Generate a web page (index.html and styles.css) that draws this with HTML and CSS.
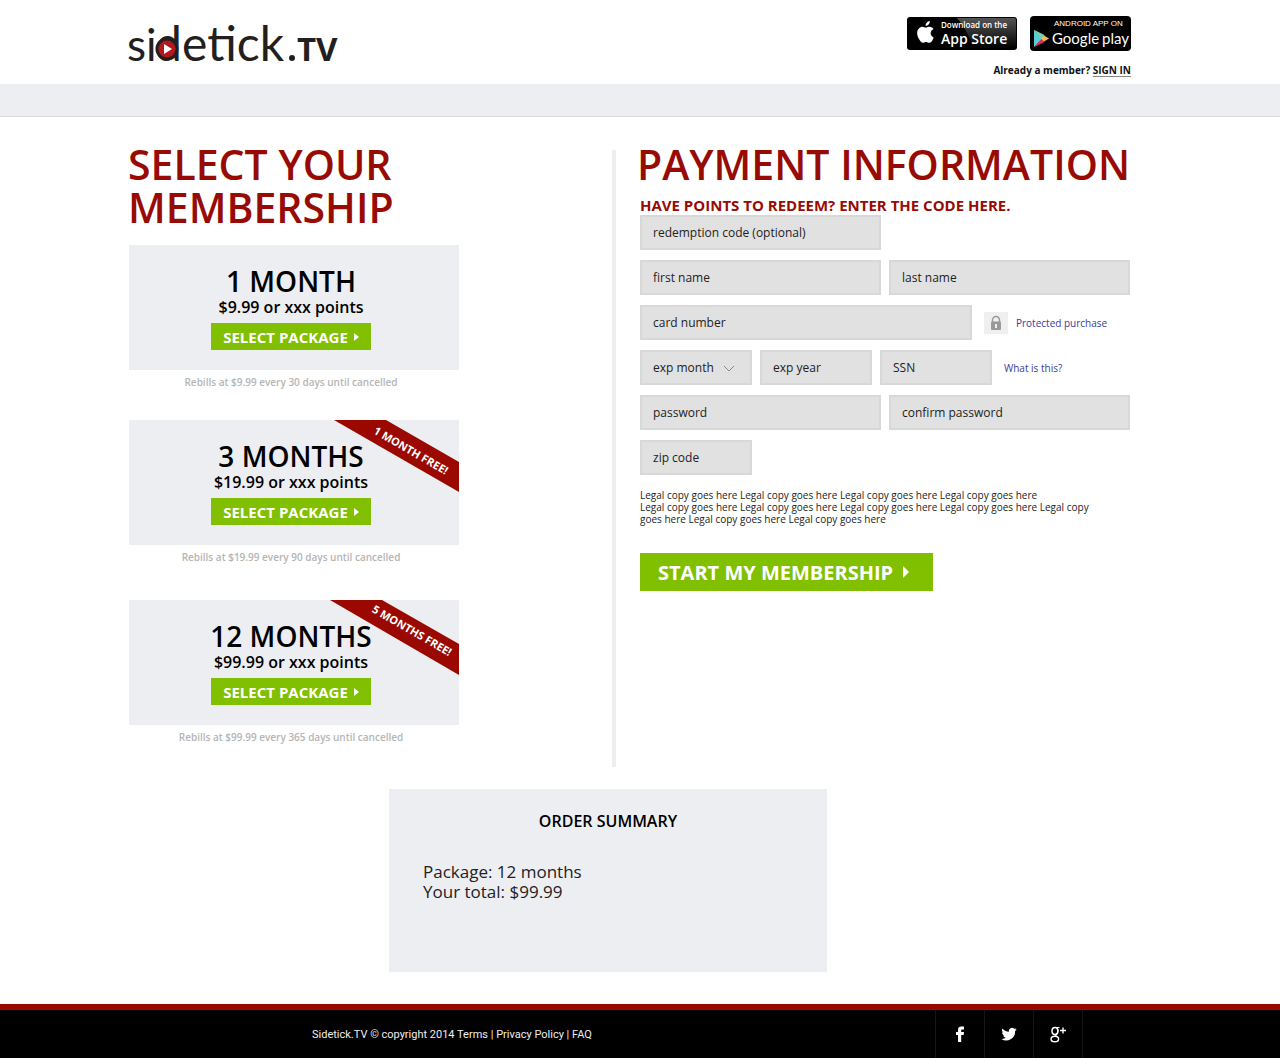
FILE: index.html
```html
<!DOCTYPE html>
<html lang="en">
<head>
<meta charset="utf-8">
<meta name="viewport" content="width=device-width, initial-scale=1">
<title>Sidetick.TV – Select your membership</title>
<link rel="stylesheet" href="styles.css">
</head>
<body>
<header class="site-header">
  <a class="logo" href="#" aria-label="sidetick.TV">
    <svg width="220" height="64" viewBox="-4 0 220 64">
      <g fill="#231f20">
        <text class="logo-small" x="-1" y="45">si</text>
        <text class="logo-thin" x="27" y="45">d</text>
        <text class="logo-thin" x="54" y="45">etick</text>
        <circle cx="164" cy="42" r="3"/>
        <text class="logo-bold" x="169" y="45">TV</text>
      </g>
      <circle cx="39" cy="33" r="10" fill="#b3171b" stroke="#231f20" stroke-width="3"/>
      <path d="M36 28v10l8-5z" fill="#fff"/>
    </svg>
  </a>
  <div class="header-side">
    <div class="badges">
      <a href="#" aria-label="Download on the App Store">
        <svg width="110" height="33" viewBox="0 0 110 33">
          <defs><linearGradient id="gloss" x1="0" y1="0" x2="0" y2="1"><stop offset="0" stop-color="#555"/><stop offset="1" stop-color="#000"/></linearGradient></defs>
          <rect width="110" height="33" rx="3" fill="#000"/>
          <path d="M50 1h57q2 0 2 2v28H66Q60 12 50 1z" fill="url(#gloss)"/>
          <path d="M23 10c-2-1-3 .7-4 .7S16 9.200 14 10c-5 2-4.500 8-2 12 1 2 2.500 4 4.200 3.700 1.300-.4 1.800-.8 3-.8s1.800.8 3.200.8c1.900 0 3.600-3 4.200-5.300-4-1.800-3.800-6.800 0-8.400-1-1.400-2.400-2-3.600-2zM18.600 9c-.2-2.500 1.700-4.700 4.200-5 .2 2.600-1.900 4.900-4.200 5z" fill="#fff"/>
          <text class="badge-small" x="34" y="11">Download on the</text>
          <text class="badge-app" x="34" y="27">App Store</text>
        </svg>
      </a>
      <a href="#" aria-label="Android app on Google Play">
        <svg width="101" height="35" viewBox="0 0 101 35">
          <rect width="101" height="35" rx="4" fill="#000"/>
          <path d="M4 14v17l9-8.500z" fill="#5ccbd8"/>
          <path d="M4 14l6 6 4.500-1z" fill="#8bd19a"/>
          <path d="M4 31l6-6 4.500 1z" fill="#d8437e"/>
          <path d="M4 14l11 6-3 2.500z" fill="#79d0b0"/>
          <path d="M4 31l11-6-3-2.500z" fill="#d8374c"/>
          <path d="M14 19.500l5 3-5 3-3-3z" fill="#f5b95c"/>
          <text class="badge-android" x="24" y="10">ANDROID APP ON</text>
          <text class="badge-google" x="22" y="28">Google</text>
          <text class="badge-google" x="72" y="28">play</text>
        </svg>
      </a>
    </div>
    <p class="member">Already a member? <a href="#">SIGN IN</a></p>
  </div>
</header>
<div class="subbar"></div>

<main class="page">
  <div class="columns">
    <section class="plans">
      <h1 class="title">SELECT YOUR<br>MEMBERSHIP</h1>
      <article class="plan">
        <div class="plan-card">
          <h2>1 MONTH</h2>
          <p class="price">$9.99 or xxx points</p>
          <button class="btn" type="button">SELECT PACKAGE <svg width="5" height="8" viewBox="0 0 5 8"><path d="M0 0l5 4-5 4z" fill="currentColor"/></svg></button>
        </div>
        <p class="rebill">Rebills at $9.99 every 30 days until cancelled</p>
      </article>
      <article class="plan">
        <div class="plan-card">
          <h2>3 MONTHS</h2>
          <p class="price">$19.99 or xxx points</p>
          <button class="btn" type="button">SELECT PACKAGE <svg width="5" height="8" viewBox="0 0 5 8"><path d="M0 0l5 4-5 4z" fill="currentColor"/></svg></button>
          <svg class="ribbon" width="130" height="75" viewBox="0 0 130 75"><path d="M5 0h52l73 42v30z" fill="#9b0800"/><text transform="translate(80 34) rotate(30)">1 MONTH FREE!</text></svg>
        </div>
        <p class="rebill">Rebills at $19.99 every 90 days until cancelled</p>
      </article>
      <article class="plan plan-year">
        <div class="plan-card">
          <h2>12 MONTHS</h2>
          <p class="price">$99.99 or xxx points</p>
          <button class="btn" type="button">SELECT PACKAGE <svg width="5" height="8" viewBox="0 0 5 8"><path d="M0 0l5 4-5 4z" fill="currentColor"/></svg></button>
          <svg class="ribbon" width="130" height="75" viewBox="0 0 130 75"><path d="M1 0h52l77 44v31z" fill="#9b0800"/><text transform="translate(81 34) rotate(30)">5 MONTHS FREE!</text></svg>
        </div>
        <p class="rebill">Rebills at $99.99 every 365 days until cancelled</p>
      </article>
    </section>

    <section class="payment">
      <h1 class="title">PAYMENT INFORMATION</h1>
      <form class="form">
        <label class="redeem" for="code">HAVE POINTS TO REDEEM? ENTER THE CODE HERE.</label>
        <div class="row"><input class="field half" id="code" type="text" placeholder="redemption code (optional)"></div>
        <div class="row">
          <input class="field half" type="text" placeholder="first name" aria-label="first name">
          <input class="field half" type="text" placeholder="last name" aria-label="last name">
        </div>
        <div class="row">
          <input class="field wide" type="text" placeholder="card number" aria-label="card number">
          <a class="help protected" href="#">
            <svg width="24" height="22" viewBox="0 0 24 22"><rect width="24" height="22" fill="#efefef"/><path d="M8.500 10V8a3.500 3.500 0 0 1 7 0v2" fill="none" stroke="#999" stroke-width="1.500"/><rect x="7" y="9.500" width="10" height="8.500" rx="1" fill="#999"/><path d="M11 12h2v4h-2z" fill="#eee"/></svg>
            Protected purchase</a>
        </div>
        <div class="row">
          <div class="select short">
            <select class="field" aria-label="exp month"><option>exp month</option></select>
            <svg width="12" height="7" viewBox="0 0 12 7"><path d="M1 1l5 5 5-5" fill="none" stroke="#888"/></svg>
          </div>
          <input class="field short" type="text" placeholder="exp year" aria-label="exp year">
          <input class="field short" type="text" placeholder="SSN" aria-label="SSN">
          <a class="help" href="#">What is this?</a>
        </div>
        <div class="row">
          <input class="field half" type="password" placeholder="password" aria-label="password">
          <input class="field half" type="password" placeholder="confirm password" aria-label="confirm password">
        </div>
        <div class="row"><input class="field short" type="text" placeholder="zip code" aria-label="zip code"></div>
        <p class="legal">Legal copy goes here Legal copy goes here Legal copy goes here Legal copy goes here<br>Legal copy goes here Legal copy goes here Legal copy goes here Legal copy goes here Legal copy goes here Legal copy goes here Legal copy goes here</p>
        <button class="btn btn-large" type="submit">START MY MEMBERSHIP <svg width="6" height="12" viewBox="0 0 6 12"><path d="M0 0l6 6-6 6z" fill="currentColor"/></svg></button>
      </form>
    </section>
  </div>

  <section class="summary">
    <h2>ORDER SUMMARY</h2>
    <p>Package: 12 months<br>Your total: $99.99</p>
  </section>
</main>

<footer class="site-footer">
  <p>Sidetick.TV © copyright 2014 <a href="#">Terms</a> | <a href="#">Privacy Policy</a> | <a href="#">FAQ</a></p>
  <nav class="social" aria-label="Social">
    <a href="#" aria-label="Facebook"><svg width="16" height="16" viewBox="0 0 16 16"><path d="M6 16V9H4V6h2V4.200C6 1.500 7.200.5 9.300.5H12V3.500h-1.700c-.9 0-1.100.4-1.100 1.200V6H12l-.4 3H9.200v7z" fill="#fff"/></svg></a>
    <a href="#" aria-label="Twitter"><svg width="16" height="16" viewBox="0 0 24 24"><path d="M23.500 5c-.8.400-1.700.6-2.700.8 1-.6 1.700-1.500 2-2.600-.9.500-1.900.9-3 1.100a4.700 4.700 0 0 0-8 4.300C7.900 8.400 4.400 6.500 2.100 3.700c-1.300 2.200-.6 4.900 1.400 6.300-.8 0-1.500-.2-2.100-.6 0 2.300 1.600 4.200 3.800 4.700-.7.200-1.400.2-2.100.1.600 1.900 2.300 3.200 4.400 3.200A9.500 9.500 0 0 1 .5 19.400 13.400 13.400 0 0 0 21.200 7.500c.9-.7 1.700-1.500 2.300-2.500z" fill="#fff"/></svg></a>
    <a href="#" aria-label="Google Plus"><svg width="16" height="17" viewBox="0 0 16 17" fill="none" stroke="#fff"><ellipse cx="5" cy="5" rx="3" ry="3.500" stroke-width="1.500"/><path d="M5 1.500h4.500M7 2.500c1 1 1.300 4-.5 5.500-1.500 1.200-1 1.700.5 2.700" stroke-width="1.200"/><ellipse cx="4.800" cy="13" rx="3.800" ry="2.800" stroke-width="1.400"/><path d="M13 1.500v6M10 4.500h6" stroke-width="1.400"/></svg></a>
  </nav>
</footer>
</body>
</html>
```
FILE: styles.css
```css
* { box-sizing: border-box; }
body {
  margin: 0;
  min-height: 100vh;
  display: flex;
  flex-direction: column;
  background: #fff;
  color: #000;
  font-family: "Open Sans", "Noto Sans", sans-serif;
}
h1, h2, p { margin: 0; }
a { color: inherit; text-decoration: none; }
svg { display: block; }

.site-header {
  display: flex;
  justify-content: space-between;
  padding: 16px 149px 0 10%;
  height: 84px;
}
.logo { margin-left: -4px; }
.logo svg { overflow: visible; }
.logo-small { font: 400 44px Lato, sans-serif; }
.logo-thin { font: 400 48px Lato, sans-serif; }
.logo-bold { font: 700 33px "Open Sans", sans-serif; }
.header-side { display: flex; flex-direction: column; align-items: flex-end; gap: 12px; }
.badges { display: flex; align-items: center; gap: 13px; }
.badges text { fill: #fff; }
.badge-small { font: 600 8px "Open Sans", sans-serif; }
.badge-app { font: 600 14px "Open Sans", sans-serif; }
.badge-android { font: 400 8px "Liberation Sans", sans-serif; }
.badge-google { font: 400 15px Lato, sans-serif; }
.member { font-size: 10px; line-height: 14px; font-weight: 700; color: #111; }
.member a { text-decoration: underline #888 1px; text-underline-offset: 2px; }

.subbar { height: 33px; background: #edeef2; border-bottom: 1px solid #d8d9de; }

.page { padding: 33px 147px 32px 10%; flex: 1; }
.columns { display: flex; }
.plans { flex: 0 0 484px; padding-bottom: 18px; border-right: 4px solid #edeef0; box-sizing: content-box; }
.title {
  color: #970b04;
  font-size: 41px;
  line-height: 43px;
  font-weight: 600;
  margin-top: -7px;
}
.plan { width: 330px; margin-left: 1px; margin-bottom: 26px; }
.plans .title { margin-bottom: 16px; }
.plan-card {
  position: relative;
  overflow: hidden;
  display: flex;
  flex-direction: column;
  align-items: center;
  height: 125px;
  padding: 18px 6px 0 0;
  background: #edeef2;
}
.plan-card h2 { font-size: 28px; line-height: 36px; font-weight: 600; }
.price { font-size: 16px; line-height: 16px; font-weight: 600; }
.btn {
  display: flex;
  align-items: center;
  justify-content: center;
  gap: 6px;
  height: 27px;
  padding: 0 12px;
  margin-top: 8px;
  border: 0;
  background: #80c000;
  color: #fff;
  font: 700 15px "Open Sans", sans-serif;
}
.rebill { padding: 5px 6px 0 0; font-size: 10px; line-height: 14px; font-weight: 600; color: #b5b5b5; text-align: center; height: 24px; }
.plan-year { margin-top: 31px; margin-bottom: 0; }
.ribbon { position: absolute; top: 0; right: 0; }
.ribbon text { font: 700 11px "Open Sans", sans-serif; fill: #fff; text-anchor: middle; }

.payment { flex: 1; min-width: 0; padding-left: 21px; }
.form { display: flex; flex-direction: column; gap: 10px; align-items: flex-start; padding-left: 3px; }
.redeem { margin-top: 9px; margin-bottom: -10px; font-size: 15px; line-height: 20px; font-weight: 700; color: #970b04; }
.row { display: flex; align-items: center; gap: 8px; width: 100%; }
.field {
  height: 35px;
  min-width: 0;
  padding: 0 11px;
  border: 2px solid #d8d8d8;
  border-radius: 0;
  background: #e1e1e1;
  color: #222;
  font: 400 12px "Open Sans", sans-serif;
}
.field::placeholder { color: #222; opacity: 1; }
.half { flex: 0 0 241px; }
.wide { flex: 0 0 332px; }
.short { flex: 0 0 112px; }
.select { display: flex; position: relative; }
.select .field { width: 100%; appearance: none; }
.select svg { position: absolute; right: 17px; top: 15px; pointer-events: none; }
.help { display: flex; align-items: center; gap: 8px; padding-left: 4px; font-size: 10px; color: #3a3a9c; }
.legal { margin-top: 4px; font-size: 10px; line-height: 12px; color: #222; max-width: 470px; }
.btn-large { height: 38px; margin-top: 18px; padding: 0 24px 0 18px; gap: 10px; font-size: 20px; }

.summary {
  width: 438px;
  min-height: 183px;
  margin: 22px auto 0 261px;
  padding: 20px 34px;
  background: #edeef2;
}
.summary h2 { font-size: 16px; line-height: 24px; font-weight: 600; text-align: center; }
.summary p { margin-top: 29px; font-size: 17px; line-height: 20px; color: #222; }

.site-footer {
  display: flex;
  justify-content: space-between;
  align-items: center;
  height: 54px;
  padding: 0 197px 0 312px;
  border-top: 6px solid #9b0800;
  background: #000;
  color: #eee;
  font: 11px Roboto, sans-serif;
}
.social { display: flex; align-self: stretch; border-left: 1px solid #151515; }
.social a { display: grid; place-items: center; width: 49px; border-right: 1px solid #151515; }
```
